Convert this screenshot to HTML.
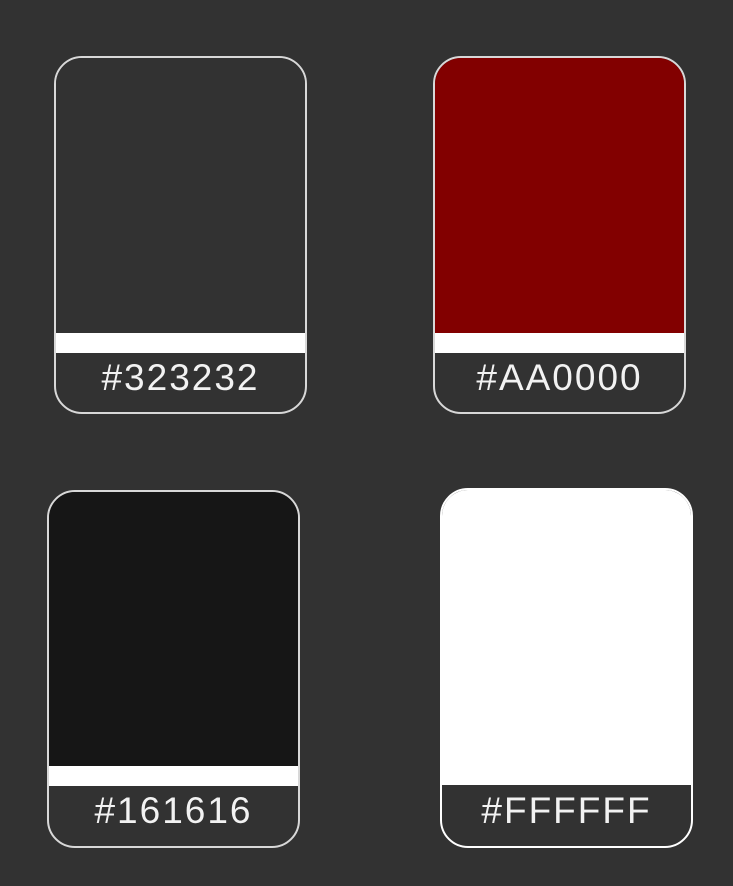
<!DOCTYPE html>
<html><head><style>
html,body{margin:0;padding:0;background:#323232;width:733px;height:886px;overflow:hidden}
.c{position:absolute;box-sizing:border-box;border:2px solid #d8d8d8;border-radius:28px;overflow:hidden;background:#323232}
.top{position:absolute;left:0;right:0;top:0}
.bar{position:absolute;left:0;right:0;background:#fff;height:20px}
.t{position:absolute;left:0;right:0;bottom:0;text-align:center;color:#f2f2f2;font-family:"Liberation Sans",sans-serif;font-size:37px;letter-spacing:2px}
</style></head><body>
<div class="c" style="left:54px;top:56px;width:253px;height:358px">
 <div class="top" style="height:275px;background:#323232"></div>
 <div class="bar" style="top:275px"></div>
 <div class="t" style="top:295px;line-height:50px">#323232</div>
</div>
<div class="c" style="left:433px;top:56px;width:253px;height:358px">
 <div class="top" style="height:275px;background:#820000"></div>
 <div class="bar" style="top:275px"></div>
 <div class="t" style="top:295px;line-height:50px">#AA0000</div>
</div>
<div class="c" style="left:47px;top:490px;width:253px;height:358px">
 <div class="top" style="height:274px;background:#161616"></div>
 <div class="bar" style="top:274px"></div>
 <div class="t" style="top:294px;line-height:50px">#161616</div>
</div>
<div class="c" style="left:440px;top:488px;width:253px;height:360px;border-color:#fff">
 <div class="top" style="height:295px;background:#fff"></div>
 <div class="t" style="top:295px;line-height:52px">#FFFFFF</div>
</div>
</body></html>
